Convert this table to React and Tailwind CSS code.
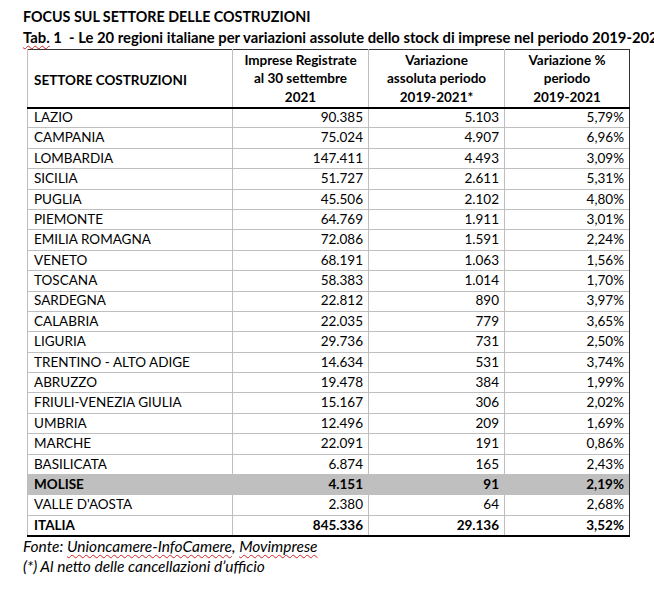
import React from "react";

const rows = [
  ["LAZIO", "90.385", "5.103", "5,79%"],
  ["CAMPANIA", "75.024", "4.907", "6,96%"],
  ["LOMBARDIA", "147.411", "4.493", "3,09%"],
  ["SICILIA", "51.727", "2.611", "5,31%"],
  ["PUGLIA", "45.506", "2.102", "4,80%"],
  ["PIEMONTE", "64.769", "1.911", "3,01%"],
  ["EMILIA ROMAGNA", "72.086", "1.591", "2,24%"],
  ["VENETO", "68.191", "1.063", "1,56%"],
  ["TOSCANA", "58.383", "1.014", "1,70%"],
  ["SARDEGNA", "22.812", "890", "3,97%"],
  ["CALABRIA", "22.035", "779", "3,65%"],
  ["LIGURIA", "29.736", "731", "2,50%"],
  ["TRENTINO - ALTO ADIGE", "14.634", "531", "3,74%"],
  ["ABRUZZO", "19.478", "384", "1,99%"],
  ["FRIULI-VENEZIA GIULIA", "15.167", "306", "2,02%"],
  ["UMBRIA", "12.496", "209", "1,69%"],
  ["MARCHE", "22.091", "191", "0,86%"],
  ["BASILICATA", "6.874", "165", "2,43%"],
  ["MOLISE", "4.151", "91", "2,19%", "molise"],
  ["VALLE D'AOSTA", "2.380", "64", "2,68%"],
];

const squiggle = "underline decoration-wavy decoration-[#d02020] decoration-1 underline-offset-2";

const App = () => {
  return (
    <div className="w-[654px] h-[594px] bg-white overflow-hidden font-['Lato',sans-serif] text-black">
      <div className="pt-[7px] pl-[23px]">
        <h1 className="text-[14.3px] font-bold leading-[20px]">FOCUS SUL SETTORE DELLE COSTRUZIONI</h1>
        <p className="text-[14.8px] font-bold leading-[20px] whitespace-nowrap">
          <span className={squiggle}>Tab.</span> 1&nbsp; - Le 20 regioni italiane per variazioni assolute dello stock di imprese nel periodo 2019-2021
        </p>
      </div>

      <table className="ml-[27px] mt-[2px] border-collapse table-fixed text-[13.5px]">
        <colgroup>
          <col className="w-[205px]" />
          <col className="w-[136px]" />
          <col className="w-[136px]" />
          <col className="w-[125px]" />
        </colgroup>
        <thead>
          <tr className="h-[58px] border-t border-t-[#333] border-b-2 border-b-black font-bold leading-[18.5px]">
            <th className="border-l border-l-[#bfbfbf] text-left pl-[6px] pt-[4px] font-bold">SETTORE COSTRUZIONI</th>
            <th className="border-l border-l-[#bfbfbf] text-center font-bold">
              Imprese Registrate<br />al 30 settembre<br />2021
            </th>
            <th className="border-l border-l-[#bfbfbf] text-center font-bold">
              Variazione<br />assoluta periodo<br />2019-2021*
            </th>
            <th className="border-l border-r border-l-[#bfbfbf] border-r-[#333] text-center font-bold">
              Variazione %<br />periodo<br />2019-2021
            </th>
          </tr>
        </thead>
        <tbody>
          {rows.map(([name, imp, abs, pct, hl]) => (
            <tr
              key={name}
              className={`h-[20.4px] border-b border-b-[#bfbfbf] ${hl ? "bg-[#bfbfbf] font-bold" : ""}`}
            >
              <td className="border-l border-l-[#bfbfbf] pl-[6px] leading-none">{name}</td>
              <td className="border-l border-l-[#bfbfbf] text-right pr-[5px] leading-none">{imp}</td>
              <td className="border-l border-l-[#bfbfbf] text-right pr-[5px] leading-none">{abs}</td>
              <td className="border-l border-r border-l-[#bfbfbf] border-r-[#333] text-right pr-[5px] leading-none">{pct}</td>
            </tr>
          ))}
          <tr className="h-[21px] border-b-2 border-b-black font-bold">
            <td className="border-l border-l-[#bfbfbf] pl-[6px] leading-none">ITALIA</td>
            <td className="border-l border-l-[#bfbfbf] text-right pr-[5px] leading-none">845.336</td>
            <td className="border-l border-l-[#bfbfbf] text-right pr-[5px] leading-none">29.136</td>
            <td className="border-l border-r border-l-[#bfbfbf] border-r-[#333] text-right pr-[5px] leading-none">3,52%</td>
          </tr>
        </tbody>
      </table>

      <div className="pl-[23px] -mt-[1px] text-[15.5px] italic leading-[20px]">
        <p>
          Fonte: <span className={squiggle}>Unioncamere-InfoCamere</span>, <span className={squiggle}>Movimprese</span>
        </p>
        <p>(*) Al netto delle cancellazioni d’ufficio</p>
      </div>
    </div>
  );
};

export default App;
